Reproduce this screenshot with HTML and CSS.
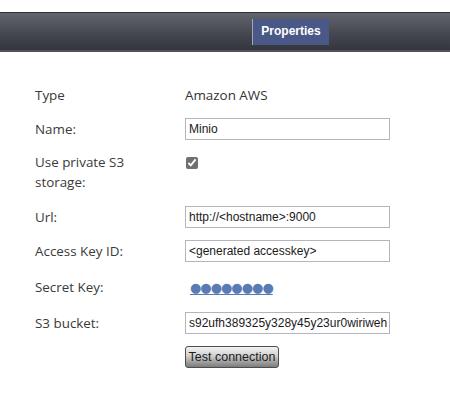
FILE: index.html
```html
<!DOCTYPE html>
<html lang="en">
<head>
    <meta charset="UTF-8">
    <title>Storage Properties</title>
    <link rel="stylesheet" href="styles.css">
</head>
<body>
    <div class="toolbar">
        <div class="tab active">Properties</div>
    </div>

    <div class="form">
        <div class="label">Type</div>
        <div class="value">Amazon AWS</div>

        <label class="label" for="name">Name:</label>
        <div class="value"><input id="name" class="field" type="text" value="Minio"></div>

        <label class="label label-wrap" for="private">Use private S3 storage:</label>
        <div class="value value-top"><input id="private" class="check" type="checkbox" checked></div>

        <label class="label" for="url">Url:</label>
        <div class="value"><input id="url" class="field" type="text" value="http://<hostname>:9000"></div>

        <label class="label" for="access">Access Key ID:</label>
        <div class="value"><input id="access" class="field" type="text" value="<generated accesskey>"></div>

        <div class="label">Secret Key:</div>
        <div class="value value-tall"><a href="#" class="secret">&#9679;&#9679;&#9679;&#9679;&#9679;&#9679;&#9679;&#9679;</a></div>

        <label class="label" for="bucket">S3 bucket:</label>
        <div class="value"><input id="bucket" class="field" type="text" value="s92ufh389325y328y45y23ur0wiriweh"></div>

        <div class="label"></div>
        <div class="value"><button class="test-button">Test connection</button></div>
    </div>
</body>
</html>
```

FILE: styles.css
```css
* {
    margin: 0;
    padding: 0;
    box-sizing: border-box;
}

body {
    font-family: "Open Sans", "DejaVu Sans", sans-serif;
    background: white;
    color: #333;
    padding-top: 12px;
}

.toolbar {
    height: 40px;
    border-top: 1px solid #2e3035;
    border-bottom: 2px solid #505256;
    background: linear-gradient(#62656d 0%, #454850 55%, #33363d 100%);
    padding: 6px 0 0 252px;
}

.tab {
    width: 77px;
    height: 26px;
    border-left: 1px solid #a4a7ae;
    background: #4a5887;
    color: white;
    font-family: "Liberation Sans", sans-serif;
    font-size: 12px;
    font-weight: bold;
    line-height: 25px;
    text-align: center;
}

.form {
    display: grid;
    grid-template-columns: 150px 206px;
    align-items: center;
    row-gap: 12px;
    padding: 32px 0 0 35px;
    font-size: 13.4px;
}

.label {
    line-height: 20px;
    color: #3a3a3a;
    max-width: 108px;
}

.label-wrap {
    padding-bottom: 2px;
}

.value {
    min-height: 22px;
    display: flex;
    align-items: center;
}

.value-top {
    align-self: start;
}

.value-tall {
    min-height: 26px;
}

.field {
    width: 205px;
    height: 22px;
    border: 1px solid #b5b5c0;
    padding: 0 2px 0 3px;
    font-family: "Liberation Sans", sans-serif;
    font-size: 12px;
    color: #1a1a1a;
    outline: none;
}

.check {
    width: 12px;
    height: 12px;
    margin-left: 1px;
    accent-color: #707070;
}

.secret {
    color: #5a7ab6;
    font-family: "DejaVu Sans", sans-serif;
    font-size: 13px;
    letter-spacing: -1px;
    text-decoration: underline;
    text-underline-offset: 2px;
    margin-left: 5px;
}

.test-button {
    font-family: "Liberation Sans", sans-serif;
    font-size: 12.5px;
    color: #1c1c1c;
    height: 22px;
    width: 94px;
    border: 1px solid #4d4d4d;
    border-radius: 3px;
    background: linear-gradient(#f2f2f2 0%, #d0d0d0 45%, #a6a6a6 70%, #7c7c7c 100%);
}
```
